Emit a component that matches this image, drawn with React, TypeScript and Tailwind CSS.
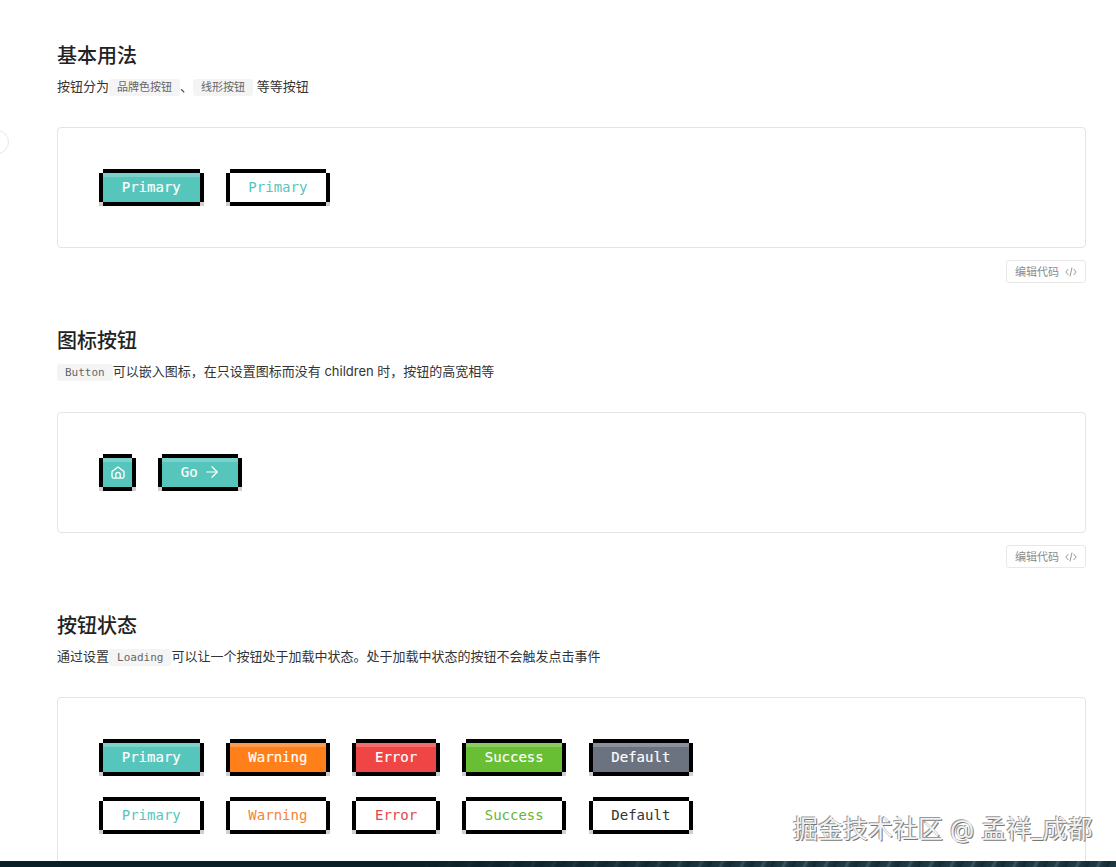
import { ArrowRight } from "lucide-react";
import type { ReactNode } from "react";

type Tone = "primary" | "warning" | "error" | "success" | "default";

const solidTone: Record<Tone, string> = {
  primary: "bg-[#56c6bc]",
  warning: "bg-[#ff7f1a]",
  error: "bg-[#f04545]",
  success: "bg-[#68bf34]",
  default: "bg-[#6b7280]",
};

const outlineTone: Record<Tone, string> = {
  primary: "text-[#56c6bc]",
  warning: "text-[#f58634]",
  error: "text-[#e2474e]",
  success: "text-[#66b534]",
  default: "text-[#333333]",
};

function PixelButton({
  tone = "primary",
  outline = false,
  square = false,
  children,
}: {
  tone?: Tone;
  outline?: boolean;
  square?: boolean;
  children: ReactNode;
}) {
  return (
    <div className="relative mx-1 shrink-0 border-y-4 border-black">
      <div
        className={`flex h-[29px] items-center justify-center pb-[2px] text-sm font-['DejaVu_Sans_Mono',monospace] shadow-[-4px_0_0_0_#000,4px_0_0_0_#000] ${
          square ? "w-[29px]" : "px-[18.75px]"
        } ${
          outline
            ? `bg-white ${outlineTone[tone]}`
            : `${solidTone[tone]} text-white inset-shadow-[0_4px_0_0_rgba(255,255,255,0.22)] [-webkit-text-stroke:0.15px]`
        }`}
      >
        {children}
      </div>
      <span className="absolute -bottom-1 -left-1 h-1 w-1 bg-[#cfcfcf]" />
      <span className="absolute -right-1 -bottom-1 h-1 w-1 bg-[#cfcfcf]" />
    </div>
  );
}

function HomeIcon() {
  return (
    <svg width="14" height="13" viewBox="0 0 14 13" fill="none" stroke="currentColor" strokeWidth="1.3" strokeLinejoin="round" className="mt-[1px]">
      <path d="M1 5.6 7 .9l6 4.7v5a1.5 1.5 0 0 1-1.5 1.5h-9A1.5 1.5 0 0 1 1 10.6Z" />
      <path d="M4.8 12V8.6a2.2 2.2 0 0 1 4.4 0V12" />
    </svg>
  );
}

function Tag({ children }: { children: ReactNode }) {
  return (
    <code className="rounded-[3px] bg-[#f4f4f5] px-2 py-[2px] text-[11px] text-[#666666] font-['DejaVu_Sans_Mono','Noto_Sans_CJK_SC',monospace]">
      {children}
    </code>
  );
}

function EditCode() {
  return (
    <div className="mt-3 flex justify-end">
      <button
        type="button"
        className="flex h-[23px] w-[80px] items-center justify-center gap-[6px] rounded-[3px] border border-[#e8e8e8] pt-[1px] text-[11px] text-[#8c8c8c]"
      >
        编辑代码
        <svg width="12" height="12" viewBox="0 0 12 12" fill="none" stroke="#8c8c8c" strokeWidth="0.9">
          <path d="M3.4 3 0.8 6l2.6 3M8.6 3l2.6 3-2.6 3M7 1.5 5 10.5" />
        </svg>
      </button>
    </div>
  );
}

function Section({ title, desc, children }: { title: string; desc: ReactNode; children: ReactNode }) {
  return (
    <section className="h-[285px]">
      <h2 className="h-[28px] text-xl leading-[30px] font-medium text-[#222222]">{title}</h2>
      <p className="mt-[7px] h-[20px] text-[13px] leading-[20px] text-[#333333]">{desc}</p>
      {children}
    </section>
  );
}

function Card({ children }: { children: ReactNode }) {
  return (
    <div className="mt-[31px] rounded-[4px] border border-[#e4e4e7] px-[41px] pt-[41px] pb-[41px]">{children}</div>
  );
}

const tones: [Tone, string][] = [
  ["primary", "Primary"],
  ["warning", "Warning"],
  ["error", "Error"],
  ["success", "Success"],
  ["default", "Default"],
];

export default function App() {
  return (
    <div className="relative h-[867px] overflow-hidden bg-white font-['Inter','Noto_Sans_CJK_SC',sans-serif]">
      {/* collapse handle of the side menu, mostly off screen */}
      <div className="absolute top-[130px] -left-[15px] h-6 w-6 rounded-full border border-[#e8e8e8] bg-white" />

      <main className="ml-[57px] w-[1029px] pt-[41px]">
        <Section
          title="基本用法"
          desc={
            <>
              按钮分为<Tag>品牌色按钮</Tag>、<Tag>线形按钮</Tag> 等等按钮
            </>
          }
        >
          <Card>
            <div className="flex gap-[22.1px]">
              <PixelButton>Primary</PixelButton>
              <PixelButton outline>Primary</PixelButton>
            </div>
          </Card>
          <EditCode />
        </Section>

        <Section
          title="图标按钮"
          desc={
            <>
              <Tag>Button</Tag>可以嵌入图标，在只设置图标而没有 children 时，按钮的高宽相等
            </>
          }
        >
          <Card>
            <div className="flex gap-[22.1px]">
              <PixelButton square>
                <HomeIcon />
              </PixelButton>
              <PixelButton>
                Go
                <ArrowRight size={18} strokeWidth={1.6} className="ml-[5px] -mr-[1px]" />
              </PixelButton>
            </div>
          </Card>
          <EditCode />
        </Section>

        <Section
          title="按钮状态"
          desc={
            <>
              通过设置<Tag>Loading</Tag>可以让一个按钮处于加载中状态。处于加载中状态的按钮不会触发点击事件
            </>
          }
        >
          <Card>
            <div className="flex flex-col gap-[21px]">
              <div className="flex gap-[22.1px]">
                {tones.map(([tone, label]) => (
                  <PixelButton key={tone} tone={tone}>
                    {label}
                  </PixelButton>
                ))}
              </div>
              <div className="flex gap-[22.1px]">
                {tones.map(([tone, label]) => (
                  <PixelButton key={tone} tone={tone} outline>
                    {label}
                  </PixelButton>
                ))}
              </div>
            </div>
          </Card>
        </Section>
      </main>

      {/* watermark */}
      <div className="absolute top-[814px] left-[793px] text-[25px] leading-[30px] whitespace-nowrap text-[#f2f2f2] [text-shadow:-1px_-1px_0_#9a9a9a,1px_1px_0_#777]">
        掘金技术社区 @ 孟祥_成都
      </div>

      {/* strip of the next section's dark background, rough water on the right */}
      <div className="absolute inset-x-0 bottom-0 h-[6px] bg-[#0a2029]">
        <div className="h-full bg-[repeating-linear-gradient(115deg,#1a3540_0px,#1f3b46_7px,#3a5762_9px,#1d3742_12px,#122a33_19px)] [mask-image:linear-gradient(to_right,transparent_35%,black_70%)]" />
      </div>
    </div>
  );
}
